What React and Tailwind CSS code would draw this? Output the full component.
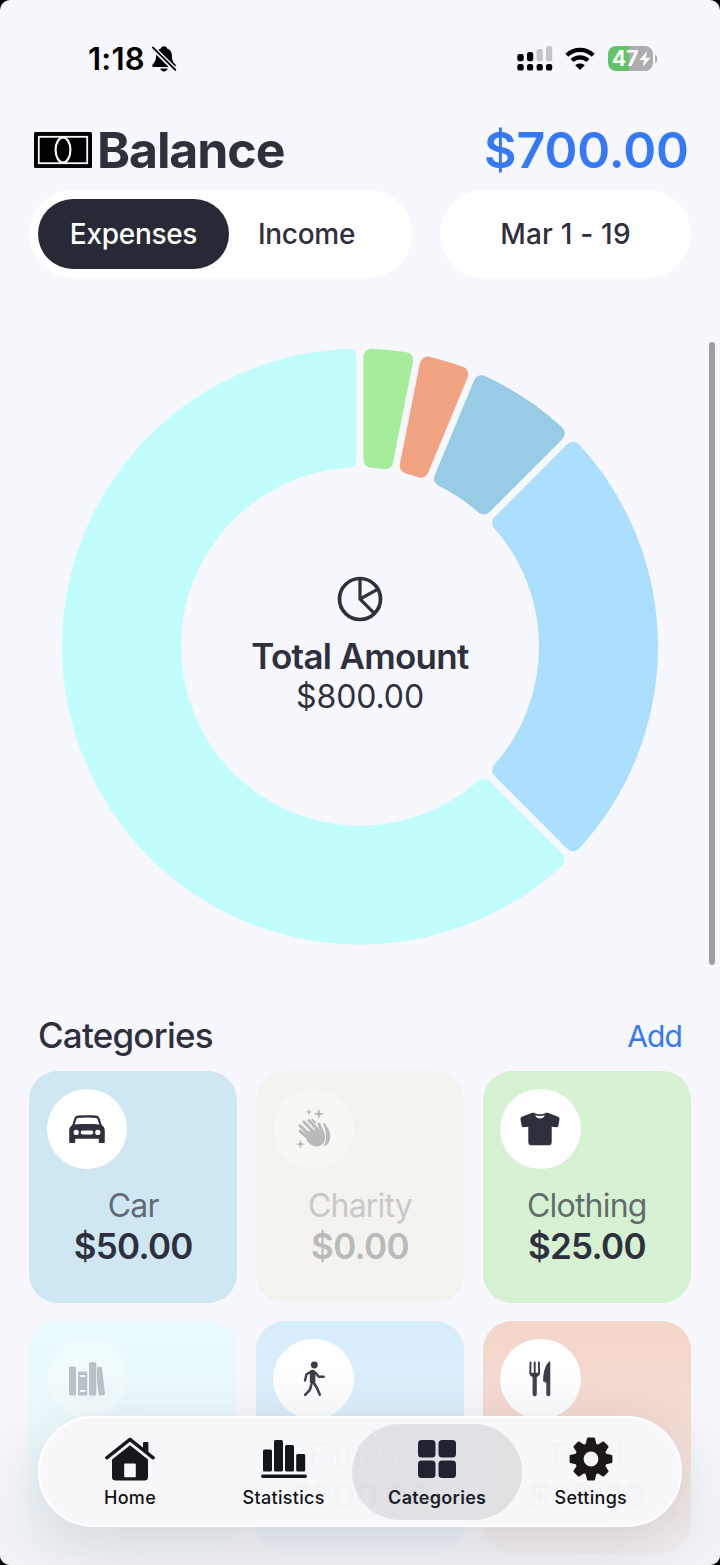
const COLORS = { ink: "#2f303d" };
const CX = 300;
const OUTER = 298;
const INNER = 179;
const GAP = 3.5;
const CORNER = 8;

const slices = [
  { value: 25, color: "#a6ed9b" },
  { value: 25, color: "#f1a482" },
  { value: 50, color: "#97cbe6" },
  { value: 200, color: "#acdefd" },
  { value: 500, color: "#c2fdfe" },
];

// The slice is inset by the corner radius and outlined with a round join,
// which gives rounded corners and parallel gaps.
function slicePath(start, end) {
  const ro = OUTER - CORNER;
  const ri = INNER + CORNER;
  const d = GAP + CORNER;
  const ao = Math.asin(d / ro);
  const ai = Math.asin(d / ri);
  const p = (r, a) => `${(CX + r * Math.sin(a)).toFixed(2)} ${(CX - r * Math.cos(a)).toFixed(2)}`;
  const large = end - start > Math.PI ? 1 : 0;
  return `M${p(ro, start + ao)} A${ro} ${ro} 0 ${large} 1 ${p(ro, end - ao)} L${p(ri, end - ai)} A${ri} ${ri} 0 ${large} 0 ${p(ri, start + ai)} Z`;
}

function Donut() {
  const total = slices.reduce((s, x) => s + x.value, 0);
  let acc = 0;
  return (
    <svg viewBox="0 -0.5 600 600" className="col-start-1 row-start-1 size-[600px]">
      {slices.map((s, i) => {
        const a = (acc / total) * Math.PI * 2;
        acc += s.value;
        const b = (acc / total) * Math.PI * 2;
        return <path key={i} d={slicePath(a, b)} fill={s.color} stroke={s.color} strokeWidth={CORNER * 2} strokeLinejoin="round" />;
      })}
    </svg>
  );
}

function BellOff() {
  return (
    <svg viewBox="0 0 26 28" className="ml-[6px] h-7 w-[26px]">
      <path d="M13 1.2c-1.7 0-2.8 1-3.1 2.2C6.600 4.500 5.200 7.200 5.100 10.500c-.1 5-1.200 6.500-3.100 8.500-1.400 1.500-.9 3 .8 3h20.400c1.700 0 2.200-1.500.8-3-1.900-2-3-3.500-3.100-8.500-.1-3.300-1.500-6-4.800-7.100C15.800 2.200 14.700 1.200 13 1.200zM9.300 23.500h7.400c-.3 1.700-1.800 2.900-3.700 2.900s-3.400-1.200-3.700-2.900z" fill="#000" />
      <path d="M.5 1.500 25.500 26.200" stroke="#f7f8fd" strokeWidth="5" />
      <path d="M2 2.600 24.300 24.900" stroke="#000" strokeWidth="1.900" strokeLinecap="round" />
    </svg>
  );
}

function Signal() {
  return (
    <svg viewBox="0 0 36 26" className="h-[26px] w-9">
      <g fill="#000">
        <rect x="0.300" y="8" width="6.400" height="7.200" rx="2.200" />
        <rect x="10" y="6" width="6.200" height="9.200" rx="2.200" />
        <rect x="0.300" y="18" width="6.400" height="6.600" rx="2.200" />
        <rect x="10" y="18" width="6.200" height="6.600" rx="2.200" />
        <rect x="19.600" y="18" width="6.200" height="6.600" rx="2.200" />
        <rect x="29" y="18" width="6.200" height="6.600" rx="2.200" />
      </g>
      <rect x="19.600" y="3" width="6.200" height="12.200" rx="2" fill="#c5c6ca" />
      <rect x="29" y="0" width="6.200" height="15.200" rx="2" fill="#c5c6ca" />
    </svg>
  );
}

function Wifi() {
  return (
    <svg viewBox="0 0 32 24" className="ml-[11px] h-6 w-8">
      <g fill="none" stroke="#000" strokeWidth="4.200">
        <path d="M2.800 8.200C10.300 1.200 21.700 1.200 29.200 8.200" />
        <path d="M8 13.500c4.700-4.200 11.300-4.200 16 0" />
      </g>
      <path d="M11.200 18.300c2.700-2.500 6.900-2.500 9.600 0L16 23z" fill="#000" />
    </svg>
  );
}

function Battery() {
  return (
    <div className="ml-[12px] flex items-center">
      <div className="flex h-[25px] w-[45px] items-center overflow-hidden rounded-[8px] bg-[linear-gradient(90deg,#62c466_47%,#acadaf_47%)] pl-[4px] text-[21px] font-bold leading-none text-white">
        <span className="w-[27px]">47</span>
        <svg viewBox="0 0 12 16" className="h-4 w-3 shrink-0"><path d="M8.200 0 .5 9h4.700L3.600 16 11.500 6.800H6.700z" fill="#fff" /></svg>
      </div>
      <div className="ml-[2px] h-2 w-[2px] rounded-r-full bg-[#acadaf]" />
    </div>
  );
}

function Money() {
  return (
    <svg viewBox="0 0 58 36" className="h-9 w-[58px]">
      <rect width="58" height="36" rx="1.500" fill="#000" />
      <rect x="4.800" y="4.800" width="48.400" height="26.400" fill="none" stroke="#f7f8fd" strokeWidth="1.800" />
      <ellipse cx="29" cy="18" rx="7.400" ry="12.500" fill="#000" stroke="#f7f8fd" strokeWidth="2.200" />
    </svg>
  );
}

function PieIcon() {
  return (
    <svg viewBox="0 0 46 46" className="size-[46px]" fill="none" stroke={COLORS.ink} strokeWidth="3.700">
      <circle cx="23" cy="23" r="20.500" />
      <path d="M23 3v20l14.300 14.300M23 23l18-9.800" strokeWidth="3.200" strokeLinejoin="round" />
    </svg>
  );
}

function CarIcon() {
  return (
    <svg viewBox="0 0 36 28" className="h-7 w-9">
      <path fillRule="evenodd" fill={COLORS.ink} d="M9.500.5C6.800.8 6 1.700 5.200 4L3.300 10C1.200 11.500.2 13.200.2 15.500V26.500c0 1 .6 1.500 1.500 1.500h3c.9 0 1.500-.5 1.500-1.500V23.800h23.600v2.700c0 1 .6 1.500 1.500 1.500h3c.9 0 1.500-.5 1.500-1.500v-11c0-2.300-1-4-3.100-5.500L30.800 4C30 1.700 29.200.8 26.500.5 21 0 15 0 9.500.5zM8.800 3c6-.8 12.400-.8 18.400 0 .8.100 1.100.5 1.400 1.300l1.700 5.100c-8-.6-16.600-.6-24.600 0l1.700-5.100c.3-.8.600-1.200 1.400-1.300zM7.200 14.800a2.600 2.600 0 1 1 0 5.200 2.600 2.600 0 0 1 0-5.200zm21.600 0a2.600 2.600 0 1 1 0 5.200 2.600 2.600 0 0 1 0-5.200zM13.600 15.600h8.800a1.900 1.900 0 0 1 0 3.800h-8.800a1.900 1.900 0 0 1 0-3.800z" />
    </svg>
  );
}

function HandsIcon() {
  return (
    <svg viewBox="0 0 36 40" className="h-10 w-9" fill={COLORS.ink}>
      <path d="M12.800-.5l.8 2.700 2.700.8-2.700.8-.8 2.700-.8-2.700L9.300 3l2.700-.8zM22.800-.4l1.300 4.100 4.100 1.300-4.100 1.300-1.300 4.100-1.300-4.100L17.400 5l4.100-1.300zM4.300 30.500l1.100 3.500 3.500 1.100-3.500 1.100-1.100 3.500-1.100-3.500-3.500-1.100L3.200 34z" />
      <g fill="none" stroke={COLORS.ink} strokeLinecap="round" strokeWidth="3.100">
        <path d="M4.100 22.200 14.500 31" />
        <path d="M4 16.800 15 27" />
        <path d="M7.800 12.800 18 23.500" />
        <path d="M13 11.600 22.500 21.500" />
        <path d="M23 15.200 27 25" />
      </g>
      <path d="M11.500 25.500 14.500 21 20.500 20.500 25.500 23 28.300 24.500C30.800 31 27.500 37.300 20.500 37.500 16.500 37.500 13.500 35 10.500 31.500z" />
      <path d="M27.700 14.500C31.500 18.500 34 23.500 33.700 28c-.3 4-2 7-5.200 8.600C32 31 31.500 24 27.700 14.500z" stroke={COLORS.ink} strokeWidth="1.200" strokeLinejoin="round" />
      <path d="M16.200 10.600 19.400 13.800" stroke={COLORS.ink} strokeWidth="1.900" strokeLinecap="round" />
    </svg>
  );
}

function ShirtIcon() {
  return (
    <svg viewBox="0 0 40 34" className="h-[34px] w-10">
      <path fill={COLORS.ink} d="M13 .5 2.500 4.600C1 5.200.3 6.200.5 7.600l1.100 6c.2 1.200.9 1.700 2 1.600l4.700-.4v15.400c0 2 1 3 3 3h17.400c2 0 3-1 3-3V14.800l4.700.4c1.100.1 1.800-.4 2-1.600l1.100-6c.2-1.400-.5-2.400-2-3L27 .5c-4 2.400-10 2.400-14 0z" />
      <path fill="#fff" d="M15.300 3.300c3 .9 6.400.9 9.400 0-.6 2.200-2.400 3.300-4.700 3.300s-4.100-1.100-4.700-3.300z" />
    </svg>
  );
}

function BooksIcon() {
  return (
    <svg viewBox="0 0 36 34" className="h-[34px] w-9" fill={COLORS.ink}>
      <rect x="0" y="4.500" width="7" height="29" rx="1.500" />
      <path fillRule="evenodd" d="M10.300 9.500h6.700q1.300 0 1.300 1.300v21.400q0 1.300-1.300 1.300h-6.700Q9 33.500 9 32.200V10.800q0-1.300 1.300-1.300zm1.200 3.600a.9.900 0 0 0 0 1.900h4.300a.9.900 0 0 0 0-1.900zm0 15a.9.900 0 0 0 0 1.900h4.300a.9.900 0 0 0 0-1.900z" />
      <rect x="20" y="0.200" width="7.300" height="33.300" rx="1.500" />
      <path d="M28 5.200l3.600-.4q1.200-.1 1.400 1.100L36 31.600q.1 1.300-1.100 1.500l-3.900.4q-1.200.1-1.400-1.100L28 19z" />
    </svg>
  );
}

function WalkIcon() {
  return (
    <svg viewBox="0 0 22 36" className="h-9 w-[22px]" fill={COLORS.ink}>
      <circle cx="11.300" cy="4" r="3.400" />
      <g fill="none" stroke={COLORS.ink} strokeLinecap="round" strokeLinejoin="round">
        <path d="M9.600 11.500v9" strokeWidth="5.600" />
        <path d="M8.300 10.600 3.500 13.200 2 19.500" strokeWidth="2.400" />
        <path d="M12.300 11.500l3.400 4.300h5" strokeWidth="2.400" />
        <path d="M10.500 21.500 14 27l2.800 6.800" strokeWidth="2.600" />
        <path d="M8.300 24.200 6.800 29l-4.700 4.800" strokeWidth="2.600" />
      </g>
    </svg>
  );
}

function ForkKnifeIcon() {
  return (
    <svg viewBox="0 0 22 36" className="h-9 w-[22px]" fill={COLORS.ink}>
      <g stroke={COLORS.ink} strokeWidth="1.900" strokeLinecap="round" fill="none">
        <path d="M1.500 1.500 1.300 12M5.700 1.500V12M9.900 1.500l.2 10.500" />
      </g>
      <path d="M.4 11c1.600 1.200 9 1.200 10.600 0 .3 2.600-1 4.200-3.200 5v17.300a2.100 2.100 0 0 1-4.200 0V16C1.400 15.200.1 13.600.4 11z" />
      <path d="M21.300 1.500v31.800a2 2 0 0 1-4 0V21.700l-2.300-1c-.8-.4-1-1-.9-2C14.500 10.500 16.500 3.500 20 .8c.7-.5 1.300-.2 1.300.7z" />
    </svg>
  );
}

const cards = [
  { name: "Car", amount: "$50.00", bg: "bg-[#cfe7f3]", Icon: CarIcon },
  { name: "Charity", amount: "$0.00", bg: "bg-[#f5f3ef]", Icon: HandsIcon, off: true },
  { name: "Clothing", amount: "$25.00", bg: "bg-[#d6f2d3]", Icon: ShirtIcon },
  { name: "Education", amount: "$0.00", bg: "bg-[#eafafd]", Icon: BooksIcon, off: true },
  { name: "Fitness", amount: "$200.00", bg: "bg-[#d8edfc]", Icon: WalkIcon },
  { name: "Food", amount: "$25.00", bg: "bg-[#f4d7cb]", Icon: ForkKnifeIcon },
];

function Card({ name, amount, bg, Icon, off }) {
  return (
    <div className={`flex h-[232px] flex-col rounded-[29px] px-[17.500px] pt-[17.500px] ${bg}`}>
      <div className={`flex size-[80.500px] items-center justify-center rounded-full ${off ? "bg-white/35" : "bg-white"}`}>
        <div className={off ? "opacity-30" : ""}><Icon /></div>
      </div>
      <div className={`mt-[16.500px] text-center text-[32px] leading-[40px] tracking-[-0.800px] ${off ? "text-[#c9c9c9]" : "text-[#2f303d]/70"}`}>{name}</div>
      <div className={`text-center text-[35px] font-semibold leading-[40px] tracking-[-0.700px] ${off ? "text-[#bababa]" : "text-[#2f303d]"}`}>{amount}</div>
    </div>
  );
}

function HomeIcon() {
  return (
    <svg viewBox="0 0 50 44" className="h-11 w-[50px]" fill="#16181b">
      <path d="M1.800 20.800 25 2.300l23.200 18.500" fill="none" stroke="#16181b" strokeWidth="3.400" strokeLinecap="round" strokeLinejoin="round" />
      <path d="M38 6q0-1 1-1h3.400q1 0 1 1v10.500L38 12z" />
      <path fillRule="evenodd" d="M25 8.300 43 22.500V40q0 3.500-3.500 3.500h-29Q7 43.500 7 40V22.500zM20 26.500q-.8 0-.8.800v12.200q0 .8.800.8h10q.8 0 .8-.8V27.300q0-.8-.8-.8z" />
    </svg>
  );
}

function StatsIcon() {
  return (
    <svg viewBox="0 0 46 40" className="h-10 w-[46px]" fill="#13171b">
      <rect x="2" y="10.500" width="9" height="22" rx="1.500" />
      <rect x="13" y="1" width="9" height="31.500" rx="1.500" />
      <rect x="24" y="6" width="9" height="26.500" rx="1.500" />
      <rect x="35.200" y="15" width="9" height="17.500" rx="1.500" />
      <rect x="0" y="35.500" width="46" height="3.400" rx="1.700" />
    </svg>
  );
}

function GridIcon() {
  return (
    <svg viewBox="0 0 38 38" className="size-[38px]" fill="#1f2430">
      <rect width="17.500" height="17.500" rx="3.500" />
      <rect x="20.500" width="17.500" height="17.500" rx="3.500" />
      <rect y="20.500" width="17.500" height="17.500" rx="3.500" />
      <rect x="20.500" y="20.500" width="17.500" height="17.500" rx="3.500" />
    </svg>
  );
}

function GearIcon() {
  return (
    <svg viewBox="0 0 44 44" className="size-11" fill="#1b1817">
      <g stroke="#1b1817" strokeWidth="2" strokeLinejoin="round">
        {[0, 45, 90, 135, 180, 225, 270, 315].map((a) => (
          <path key={a} d="M17 10 19 1.600h6L27 10z" transform={`rotate(${a} 22 22)`} />
        ))}
      </g>
      <circle cx="22" cy="22" r="11.700" fill="none" stroke="#1b1817" strokeWidth="8.600" />
    </svg>
  );
}

function NavItem({ label, Icon, active }) {
  return (
    <div className={`flex h-[96px] w-[170px] shrink-0 flex-col items-center rounded-full ${active ? "bg-[#1f2430]/10 font-semibold text-[#1c1e2c]" : "font-medium text-[#121315]"}`}>
      <div className="mt-[13px] flex h-11 items-center"><Icon /></div>
      <div className="mt-[5px] text-[18px] leading-[24px] tracking-[0.300px]">{label}</div>
    </div>
  );
}

export default function App() {
  return (
    <div className="h-[1565px] w-[720px] bg-black font-['Inter','Liberation_Sans',sans-serif] text-[#2f303d]">
      <div className="relative flex h-full w-full flex-col overflow-hidden rounded-[10px] bg-[#f7f8fd]">
        <div className="flex h-[117px] items-center justify-between pl-[88px] pr-[63px]">
          <div className="flex items-center text-[31px] font-semibold leading-none tracking-[0.200px] text-black">1:18<BellOff /></div>
          <div className="flex items-center"><Signal /><Wifi /><Battery /></div>
        </div>

        <div className="mt-px flex h-[64px] items-center justify-between pl-[34px] pr-[31px]">
          <div className="flex items-center gap-[5px] text-[50px] font-bold leading-none tracking-[-1.100px]"><Money />Balance</div>
          <div className="text-[50px] font-semibold leading-none tracking-[-0.100px] text-[#3679f8]">$700.00</div>
        </div>

        <div className="mt-[7.500px] flex h-[88px] gap-7 px-[29px] text-[28px] font-medium">
          <div className="flex w-[383px] items-center rounded-[44px] bg-white pl-[9px]">
            <div className="flex h-[70px] w-[191px] items-center justify-center rounded-[35px] bg-[#272934] pt-px tracking-[-0.300px] text-white">Expenses</div>
            <div className="ml-[29px] pt-px tracking-[-0.300px]">Income</div>
          </div>
          <div className="flex w-[251px] items-center justify-center rounded-[44px] bg-white pt-px tracking-[0.200px]">Mar 1 - 19</div>
        </div>

        <div className="mt-[68.500px] grid place-items-center">
          <Donut />
          <div className="col-start-1 row-start-1 flex flex-col items-center">
            <PieIcon />
            <div className="mt-[12px] text-[35px] font-semibold leading-[44px] tracking-[-0.700px]">Total Amount</div>
            <div className="text-[32px] leading-[38px] tracking-[-0.100px]">$800.00</div>
          </div>
        </div>

        <div className="mt-[64px] flex h-[50px] items-center justify-between pl-[38px] pr-[38px]">
          <div className="text-[35px] font-medium tracking-[-0.800px]">Categories</div>
          <div className="pt-[2px] text-[30px] tracking-[-0.900px] text-[#3679f8]">Add</div>
        </div>

        <div className="mt-[11px] grid grid-cols-3 gap-x-[18.500px] gap-y-[18px] px-[29px]">
          {cards.map((c) => <Card key={c.name} {...c} />)}
        </div>

        <div className="absolute right-[5px] top-[342px] h-[623px] w-[6px] rounded-full bg-[#9fa0a3]" />

        <div className="absolute inset-x-0 bottom-0 h-[230px] bg-[linear-gradient(180deg,rgba(247,248,253,0),rgba(244,245,249,0.15)_35%,rgba(240,241,245,0.82)_90%)]" />
        <div className="absolute bottom-[38px] left-[38px] flex h-[111px] w-[644px] items-center rounded-full border-2 border-white bg-[#f8f8fa]/96 pl-[5px] shadow-[0_14px_60px_rgba(40,50,60,0.15)]">
          <div className="flex -space-x-[16.400px]">
            <NavItem label="Home" Icon={HomeIcon} />
            <NavItem label="Statistics" Icon={StatsIcon} />
            <NavItem label="Categories" Icon={GridIcon} active />
            <NavItem label="Settings" Icon={GearIcon} />
          </div>
        </div>
      </div>
    </div>
  );
}
